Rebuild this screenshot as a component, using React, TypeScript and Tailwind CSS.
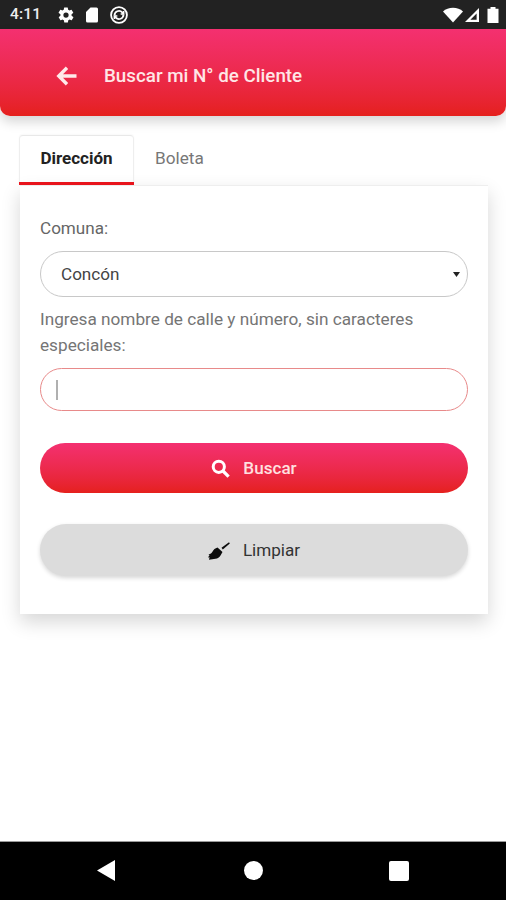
import React from "react";

function Gear() {
  return (
    <svg width="18" height="18" viewBox="0 0 24 24" fill="#fff">
      <path d="M19.4 13a7.5 7.5 0 0 0 0-2l2.1-1.6a.5.5 0 0 0 .1-.6l-2-3.5a.5.5 0 0 0-.6-.2l-2.5 1a7.3 7.3 0 0 0-1.7-1l-.4-2.6a.5.5 0 0 0-.5-.4h-4a.5.5 0 0 0-.5.4l-.4 2.6a7.3 7.3 0 0 0-1.7 1l-2.5-1a.5.5 0 0 0-.6.2l-2 3.5a.5.5 0 0 0 .1.6L4.6 11a7.5 7.5 0 0 0 0 2l-2.1 1.6a.5.5 0 0 0-.1.6l2 3.5c.1.2.4.3.6.2l2.5-1c.5.4 1.1.7 1.7 1l.4 2.6c0 .2.3.4.5.4h4c.2 0 .5-.2.5-.4l.4-2.6c.6-.3 1.2-.6 1.7-1l2.5 1c.2.1.5 0 .6-.2l2-3.5a.5.5 0 0 0-.1-.6L19.4 13zM12 15.5a3.5 3.5 0 1 1 0-7 3.5 3.5 0 0 1 0 7z" />
    </svg>
  );
}

function Sd() {
  return (
    <svg width="18" height="18" viewBox="0 0 24 24" fill="#fff">
      <path d="M18 2h-8L4 8v12a2 2 0 0 0 2 2h12a2 2 0 0 0 2-2V4a2 2 0 0 0-2-2z" />
    </svg>
  );
}

function Sync() {
  return (
    <svg width="20" height="20" viewBox="0 0 24 24" fill="none" stroke="#fff" strokeWidth="2.2">
      <circle cx="12" cy="12" r="9.5" />
      <path d="M6.6 12.5a5.4 5.4 0 0 1 9.3-3.7l1.6 1.7M17.4 11.5a5.4 5.4 0 0 1-9.3 3.7l-1.6-1.7" />
      <path d="M17.600 7.200v3.600h-3.600M6.400 16.800v-3.600H10" strokeWidth="1.8" />
    </svg>
  );
}

function StatusBar() {
  return (
    <div className="h-[29px] shrink-0 bg-[#222222] flex items-center justify-between pl-[10px] pr-[6px]">
      <div className="flex items-center">
        <span className="text-[15.5px] font-medium text-[#eeeeee] w-[47px] leading-none tracking-[0.2px]">4:11</span>
        <div className="flex items-center gap-[8px]">
          <Gear />
          <Sd />
          <Sync />
        </div>
      </div>
      <div className="flex items-center">
        <svg width="20" height="16" viewBox="0 0 20 16" fill="#fff">
          <path d="M0 4.5 C5 -0.5 15 -0.5 20 4.5 L10 15.5 Z" />
        </svg>
        <svg width="16" height="16" viewBox="0 0 16 16" className="ml-[1px]">
          <path d="M15 1 V15 H1 Z" fill="#fff" />
          <path d="M12.6 6.5 V12.8 H6.4 Z" fill="#222222" />
        </svg>
        <svg width="14" height="18" viewBox="0 0 14 18" fill="#fff" className="ml-[6px]">
          <path d="M4.500 1h5v1.800h3v14.200h-11V2.800h3z" />
        </svg>
      </div>
    </div>
  );
}

function Header() {
  return (
    <div className="h-[87px] shrink-0 rounded-b-[10px] bg-gradient-to-b from-[#f43070] to-[#e5201c] shadow-[0_6px_12px_rgba(0,0,0,0.16)] flex items-center pl-[56px] pt-[7px]">
      <svg width="21" height="20" viewBox="0 0 21 20" fill="none" stroke="#ffe9ea" strokeWidth="3.4">
        <path d="M20.500 10H3M11 1.800 2.800 10l8.200 8.200" />
      </svg>
      <span className="ml-[27px] text-[18.8px] font-medium text-[#ffe6e6] leading-none">Buscar mi N° de Cliente</span>
    </div>
  );
}

function Tabs() {
  return (
    <div className="flex h-[50px] mt-[19px] ml-[19px]">
      <div className="w-[115px] rounded-t-[4px] border border-b-0 border-[#eeeeee] border-t-[#e8e8e8] flex flex-col shadow-[0_-1px_2px_rgba(0,0,0,0.03)]">
        <div className="flex-1 flex items-center justify-center text-[17px] font-bold text-[#222222]">Dirección</div>
        <div className="h-[3px] bg-[#e8141c] -mx-[1px]" />
      </div>
      <div className="w-[70px] ml-[21px] flex items-center text-[17.2px] text-[#777777] pb-[3px]">Boleta</div>
    </div>
  );
}

function BroomIcon() {
  return (
    <svg width="22" height="18" viewBox="0 0 22 18" fill="#0c0c0c">
      <path d="M13.500 5.800 21 .200l.8 1.200-7 6z" />
      <path d="M9.500 5.500l5 4.500-2 3.500c-1 2-3 3-5 3.200L1 17.800l.6-2.600-1.600.3 1.600-2.400-1.200-.6c2-.5 3.500-1.500 4.200-3 .8-1.800 2.600-3.200 4.900-4z" />
    </svg>
  );
}

function Card() {
  return (
    <div className="mx-[20px] w-[468px] h-[429px] bg-white border-t border-[#eeeeee] shadow-[0_8px_18px_rgba(0,0,0,0.16)] px-[20px] pt-[29px]">
      <div className="text-[17.1px] leading-[26px] text-[#666666]">Comuna:</div>
      <div className="mt-[10px] h-[46px] rounded-full border border-[#c8c8c8] flex items-center justify-between pl-[20px] pr-[7px] pt-[1px] text-[17.1px] text-[#444444]">
        <span>Concón</span>
        <svg width="7" height="5" viewBox="0 0 7 5" fill="#222222">
          <path d="M0 0h7L3.500 5z" />
        </svg>
      </div>
      <div className="mt-[9px] text-[17.2px] leading-[26px] text-[#757575]">
        Ingresa nombre de calle y número, sin caracteres especiales:
      </div>
      <div className="mt-[10px] h-[43px] rounded-full border border-[#e88a8a] flex items-center pl-[15px]">
        <div className="w-[2px] h-[20px] bg-[#b0b0b0]" />
      </div>
      <button className="mt-[32px] w-full h-[50px] rounded-full bg-gradient-to-b from-[#f43070] to-[#e5201c] flex items-center justify-center pt-[1px] text-[17.1px] font-medium text-[#ffe0e0]">
        <svg width="19" height="19" viewBox="0 0 19 19" fill="none" stroke="#fff" className="mr-[13px]">
          <circle cx="7.800" cy="7.800" r="5.600" strokeWidth="3" />
          <path d="M12 12l5.600 5.600" strokeWidth="3.200" />
        </svg>
        Buscar
      </button>
      <button className="mt-[31px] w-full h-[52px] rounded-full bg-[#dcdcdc] shadow-[0_2px_4px_rgba(0,0,0,0.16)] flex items-center justify-center pt-[1px] text-[17.1px] text-[#333333]">
        <span className="mr-[13px] flex"><BroomIcon /></span>
        Limpiar
      </button>
    </div>
  );
}

function NavBar() {
  return (
    <div className="h-[59px] shrink-0 bg-black border-t border-[#9a9a9a] flex items-center">
      <div className="w-full flex items-center justify-between pl-[97px] pr-[97px] pb-[1px]">
        <svg width="18" height="21" viewBox="0 0 18 21" fill="#fff">
          <path d="M18 0v21L0 10.500z" />
        </svg>
        <div className="w-[19px] h-[19px] rounded-full bg-white ml-[3px]" />
        <div className="w-[20px] h-[20px] rounded-[2px] bg-white" />
      </div>
    </div>
  );
}

export default function App() {
  return (
    <div className="w-[506px] h-[900px] bg-white flex flex-col overflow-hidden font-['Roboto',sans-serif]">
      <StatusBar />
      <Header />
      <div className="flex-1 min-h-0">
        <Tabs />
        <Card />
      </div>
      <NavBar />
    </div>
  );
}
